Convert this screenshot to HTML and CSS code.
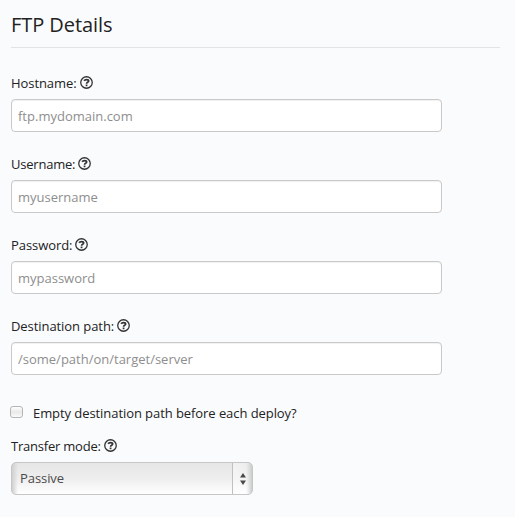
FILE: index.html
```html
<!DOCTYPE html>
<html lang="en">
<head>
<meta charset="utf-8">
<title>FTP Details</title>
<link rel="stylesheet" href="styles.css">
</head>
<body>
<svg width="0" height="0" class="defs">
  <symbol id="help" viewBox="0 0 14 14">
    <circle cx="7" cy="7" r="6.200" fill="none" stroke="currentColor" stroke-width="1.400"/>
    <path d="M4.400 5.200C5 4.200 5.800 3.900 7 3.900c1.500 0 2.300.5 2.300 1.500C9.300 6.900 7.100 6.600 7.100 8.300" fill="none" stroke="currentColor" stroke-width="1.900"/>
    <path d="M6.100 9.200h1.900v1.800H6.100z" fill="currentColor"/>
  </symbol>
</svg>
<form class="form">
  <h1 class="title">FTP Details</h1>
  <div class="field">
    <label class="label" for="host">Hostname:<svg class="help"><use href="#help"/></svg></label>
    <input class="input" id="host" type="text" placeholder="ftp.mydomain.com">
  </div>
  <div class="field">
    <label class="label tight" for="user">Username:<svg class="help"><use href="#help"/></svg></label>
    <input class="input" id="user" type="text" placeholder="myusername">
  </div>
  <div class="field">
    <label class="label" for="pass">Password:<svg class="help"><use href="#help"/></svg></label>
    <input class="input" id="pass" type="text" placeholder="mypassword">
  </div>
  <div class="field">
    <label class="label" for="path">Destination path:<svg class="help"><use href="#help"/></svg></label>
    <input class="input" id="path" type="text" placeholder="/some/path/on/target/server">
  </div>
  <label class="check"><input class="box" type="checkbox"><span>Empty destination path before each deploy?</span></label>
  <div class="field">
    <div class="label tight">Transfer mode:<svg class="help"><use href="#help"/></svg></div>
    <div class="select" role="combobox" tabindex="0">
      <span class="value">Passive</span>
      <span class="arrows"><svg width="6" height="12" viewBox="0 0 6 12"><path d="M3 0l3 4.500H0zM3 12l3-4.500H0z" fill="#4a4a4a"/></svg></span>
    </div>
  </div>
</form>
</body>
</html>
```
FILE: styles.css
```css
* { box-sizing: border-box; }
body {
  margin: 0;
  background: #fafbfd;
  color: #222;
  font: 13px/20px "Open Sans", sans-serif;
  letter-spacing: -.07px;
}
.defs { display: none; }
.form { padding: 10px 15px 0 11px; }
.title {
  margin: 0 0 25px;
  height: 38px;
  border-bottom: 1px solid #e2e3e5;
  font-size: 20px;
  line-height: 30px;
  font-weight: 400;
}
.field { margin-bottom: 22px; }
.label {
  display: flex;
  align-items: center;
  gap: 3px;
  height: 20px;
  margin-bottom: 6px;
}
.tight { letter-spacing: -.22px; }
.help { width: 13px; height: 13px; margin-bottom: 1px; color: #333; }
.input {
  display: block;
  width: 431px;
  height: 33px;
  padding: 0 6px;
  border: 1px solid #c9c9c9;
  border-radius: 4px;
  background: #fff;
  box-shadow: inset 0 1px 1px rgba(0, 0, 0, .06);
  font: inherit;
  letter-spacing: 0;
}
.input::placeholder { color: #8e8e8e; opacity: 1; }
.check {
  display: flex;
  height: 20px;
  margin: 28px 0 13px;
}
.box {
  appearance: none;
  width: 13px;
  height: 12px;
  margin: 3px 10px 0 -1px;
  border: 1px solid #b5b5b5;
  border-radius: 3px;
  background: linear-gradient(#fff, #e9e9e9 50%, #fafafa);
}
.select {
  display: flex;
  width: 242px;
  height: 33px;
  border: 1px solid #c6c6c6;
  border-radius: 5px;
  background: linear-gradient(90deg, #d0d0d0, rgba(208, 208, 208, 0) 6px, rgba(208, 208, 208, 0) 234px, #cbcbcb), linear-gradient(#e6e6e6, #eee 50%, #fff);
  color: #4a4a4a;
}
.value { flex: 1; padding: 5px 8px; }
.arrows {
  display: flex;
  align-items: center;
  width: 20px;
  padding-left: 7px;
  border-left: 1px solid #c0c0c0;
  background: linear-gradient(90deg, rgba(255, 255, 255, .45), rgba(255, 255, 255, .3) 12px, transparent);
}
```
